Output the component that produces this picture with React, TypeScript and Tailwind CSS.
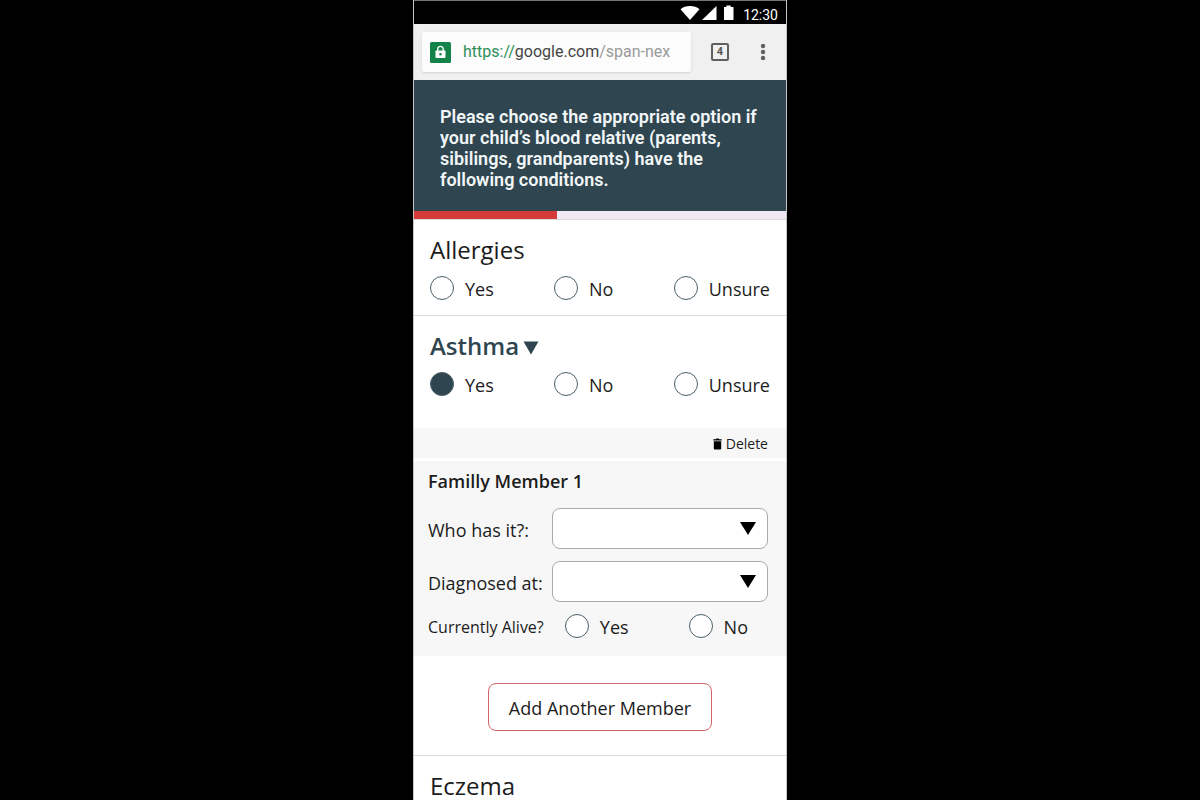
import { useState } from 'react';

type Question = {
  id: string;
  title: string;
};

const relatives = ['Mother', 'Father', 'Sibling', 'Grandparent'];
const ages = ['0-5', '6-12', '13-18', '18+'];

const StatusBar = () => (
  <div className="flex h-6 shrink-0 items-center justify-end border-t border-neutral-500 bg-black pr-2 text-white">
    <svg width="20" height="16" viewBox="0 0 20 16" fill="currentColor" aria-hidden="true">
      <path d="M10 15L0.5 4.200C3 2.200 6.400 1 10 1s7 1.200 9.500 3.200z" />
    </svg>
    <svg width="16" height="16" viewBox="0 0 16 16" fill="currentColor" className="mr-1 ml-0.5" aria-hidden="true">
      <path d="M0 15L14.500 1v14z" />
    </svg>
    <svg width="14" height="16" viewBox="0 0 14 16" fill="currentColor" aria-hidden="true">
      <path d="M2 2h2.300V0.500h4.400V2H11.500v13H2z" />
    </svg>
    <span className="ml-[7px] pt-1 text-sm leading-5">12:30</span>
  </div>
);

const BrowserBar = () => (
  <div className="flex h-14 shrink-0 items-center bg-[#f0f0f0] pl-2 pr-4">
    <div className="flex h-10 min-w-0 flex-1 items-center gap-3 rounded-xs bg-[#fcfcfc] px-2 shadow-sm">
      <svg width="21" height="21" viewBox="0 0 21 21" className="shrink-0" aria-hidden="true">
        <rect width="21" height="21" rx="1.500" fill="#14834a" />
        <path d="M7.700 9V7.200a2.800 2.800 0 0 1 5.600 0V9" fill="none" stroke="#fff" strokeWidth="1.400" />
        <rect x="5.500" y="8.500" width="10" height="7.600" rx="0.800" fill="#fff" />
        <circle cx="10.500" cy="12.300" r="1.200" fill="#14834a" />
      </svg>
      <span className="truncate text-base text-[#9a9a9a]">
        <span className="text-[#2b8f57]">https://</span>
        <span className="text-[#444]">google.com</span>/span-nex
      </span>
    </div>
    <button
      type="button"
      aria-label="Open tabs"
      className="ml-5 flex h-[18px] w-[18px] items-center justify-center rounded-xs border-2 border-[#606060] text-[11px] font-bold text-[#555]"
    >
      4
    </button>
    <button type="button" aria-label="More options" className="ml-[27px] text-[#606060]">
      <svg width="14" height="20" viewBox="0 0 14 20" fill="currentColor">
        <circle cx="7" cy="4" r="2.200" />
        <circle cx="7" cy="10" r="2.200" />
        <circle cx="7" cy="16" r="2.200" />
      </svg>
    </button>
  </div>
);

type RadioProps = {
  name: string;
  label: string;
  checked: boolean;
  onChange: () => void;
};

const Radio = ({ name, label, checked, onChange }: RadioProps) => (
  <label className="flex h-6 items-center gap-[11px] text-lg">
    <input
      type="radio"
      name={name}
      checked={checked}
      onChange={onChange}
      className="size-6 appearance-none rounded-full border border-[#4a5f69] bg-white checked:bg-[#2f4650]"
    />
    <span className="pt-0.5">{label}</span>
  </label>
);

type QuestionBlockProps = {
  question: Question;
  value?: string;
  onChange: (value: string) => void;
};

const QuestionBlock = ({ question, value, onChange }: QuestionBlockProps) => {
  const open = value === 'Yes';

  return (
    <div role="radiogroup" aria-labelledby={question.id} className="px-4 pt-3 pb-[15px]">
      <h2
        id={question.id}
        className={
          open
            ? 'flex items-center gap-1 text-2xl leading-9 font-semibold text-[#2f4650]'
            : 'text-2xl leading-9'
        }
      >
        {question.title}
        {open && (
          <svg width="16" height="14" viewBox="0 0 16 14" fill="currentColor" className="mt-1" aria-hidden="true">
            <path d="M0.500 0.500h15L8 13.500z" />
          </svg>
        )}
      </h2>
      <div className="mt-2 flex justify-between">
        {['Yes', 'No', 'Unsure'].map((option) => (
          <Radio
            key={option}
            name={question.id}
            label={option}
            checked={value === option}
            onChange={() => onChange(option)}
          />
        ))}
      </div>
    </div>
  );
};

type SelectRowProps = {
  id: string;
  label: string;
  options: string[];
};

const SelectRow = ({ id, label, options }: SelectRowProps) => (
  <div className="flex items-center justify-between">
    <label htmlFor={id} className="pt-0.5 text-lg">{label}</label>
    <div className="relative w-[216px]">
      <select
        id={id}
        defaultValue=""
        className="h-[41px] w-full appearance-none rounded-lg border border-[#aaa] bg-white px-3 text-base"
      >
        <option value=""></option>
        {options.map((option) => (
          <option key={option}>{option}</option>
        ))}
      </select>
      <svg
        width="16"
        height="13"
        viewBox="0 0 16 13"
        className="pointer-events-none absolute top-3.5 right-3"
        aria-hidden="true"
      >
        <path d="M0 0h16L8 13z" />
      </svg>
    </div>
  </div>
);

const FamilyMember = () => {
  const [alive, setAlive] = useState('');

  return (
    <div className="mt-[17px]">
      <div className="flex h-[30px] items-center justify-end bg-[#f7f7f7] pr-[18px]">
        <button type="button" className="flex items-center gap-1 pt-0.5 text-sm">
          <svg width="9" height="12" viewBox="0 0 9 12" aria-hidden="true">
            <path d="M0.300 1.200h2.500L3.300 0.500h2.400l0.500 0.700h2.500v1.300H0.300zM0.800 3.200h7.400v7.300a1 1 0 0 1-1 1H1.800a1 1 0 0 1-1-1z" />
          </svg>
          Delete
        </button>
      </div>
      <div className="mt-[3px] bg-[#f7f7f7] pt-2 pr-[18px] pb-[18px] pl-3.5">
        <h3 className="text-lg leading-6 font-semibold">Familly Member 1</h3>
        <div className="mt-[15px] flex flex-col gap-3">
          <SelectRow id="relative" label="Who has it?:" options={relatives} />
          <SelectRow id="age" label="Diagnosed at:" options={ages} />
        </div>
        <div role="radiogroup" aria-labelledby="alive-label" className="mt-3 flex h-6 items-center">
          <span id="alive-label" className="flex-1 pt-0.5 text-base leading-6">Currently Alive?</span>
          <div className="flex gap-[60px] pr-5">
            {['Yes', 'No'].map((option) => (
              <Radio
                key={option}
                name="alive"
                label={option}
                checked={alive === option}
                onChange={() => setAlive(option)}
              />
            ))}
          </div>
        </div>
      </div>
      <div className="flex justify-center pt-[27px] pb-6">
        <button
          type="button"
          className="h-12 rounded-lg border border-[#d0666a] px-5 pt-0.5 text-lg"
        >
          Add Another Member
        </button>
      </div>
    </div>
  );
};

const questions: Question[] = [
  { id: 'allergies', title: 'Allergies' },
  { id: 'asthma', title: 'Asthma' },
  { id: 'eczema', title: 'Eczema' },
];

export default function App() {
  const [answers, setAnswers] = useState<Record<string, string>>({ asthma: 'Yes' });

  return (
    <div className="flex h-screen justify-center overflow-hidden bg-black">
      <div className="flex w-full max-w-[374px] flex-col border-x border-[#c4c4c4] bg-white font-[Roboto,sans-serif]">
        <StatusBar />
        <BrowserBar />

        <header className="bg-[#2f4650] px-[26px] pt-[26px] pb-[21px]">
          <h1 className="text-lg leading-[21px] font-semibold text-[#f2f6f8]">
            Please choose the appropriate option if your child’s blood relative (parents, sibilings, grandparents) have the following conditions.
          </h1>
        </header>

        {/* Progress */}
        <div className="h-2 shrink-0 bg-[#f1eaf6]">
          <div className="h-full w-5/13 bg-[#d63a3a]" />
        </div>

        {/* Questions */}
        <main className="min-h-0 flex-1 overflow-y-auto font-['Open_Sans',sans-serif] text-[#1c1c1c] [scrollbar-width:none]">
          {questions.map((question) => (
            <section key={question.id} className="border-t border-[#dcdcdc]">
              <QuestionBlock
                question={question}
                value={answers[question.id]}
                onChange={(value) => setAnswers({ ...answers, [question.id]: value })}
              />
              {answers[question.id] === 'Yes' && <FamilyMember />}
            </section>
          ))}
        </main>
      </div>
    </div>
  );
}
